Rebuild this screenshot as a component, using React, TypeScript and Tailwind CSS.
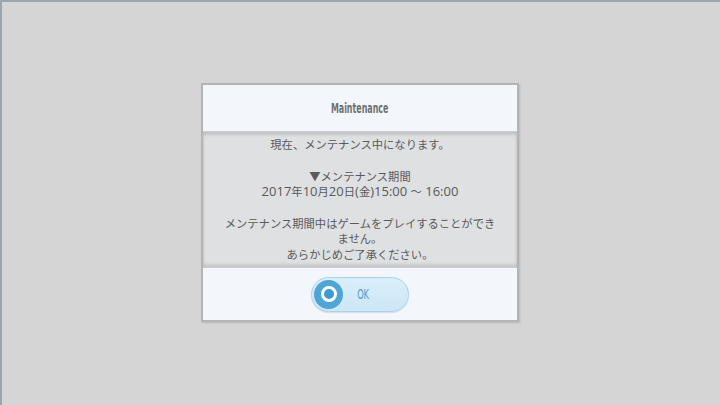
import React from 'react';

const jp = { fontFamily: '"Noto Sans CJK JP", "Noto Sans", sans-serif' };
const latin = { fontFamily: '"Open Sans", "Noto Sans", sans-serif' };
const cond = { fontFamily: '"DejaVu Sans Condensed", "DejaVu Sans", sans-serif' };

const L = ({ children }: { children: React.ReactNode }) => (
    <span style={latin} className="text-[13px]">{children}</span>
);

export default function App() {
    return (
        <div className="w-[720px] h-[405px] bg-[#d5d5d5] shadow-[inset_2px_2px_0_#9ca6ae] flex items-start justify-center overflow-hidden">
            <div className="mt-[83px] w-[318px] border-2 border-[#b4b4b4] bg-[#f3f6fa] flex flex-col shadow-[1px_1px_2px_rgba(0,0,0,0.15)]">
                <div className="h-[46px] flex items-center justify-center">
                    <span style={cond} className="text-[14px] font-bold text-[#707070] scale-x-[0.63]">Maintenance</span>
                </div>
                <div style={jp} className="h-[137px] bg-[#dee0e2] border-y border-[#c9cbcd] shadow-[inset_0_3px_3px_rgba(0,0,0,0.12),inset_0_-3px_3px_rgba(0,0,0,0.1)] flex flex-col items-center pt-[5px] px-[18px] text-[11.3px] leading-[15.5px] text-[#5a5a5a] text-center">
                    <p>現在、メンテナンス中になります。</p>
                    <p className="mt-[16px]">▼メンテナンス期間</p>
                    <p><L>2017</L>年<L>10</L>月<L>20</L>日<L>(</L>金<L>)15:00 </L>～<L> 16:00</L></p>
                    <p className="mt-[16px]">メンテナンス期間中はゲームをプレイすることができません。</p>
                    <p>あらかじめご了承ください。</p>
                </div>
                <div className="h-[52px] flex items-center justify-center">
                    <div className="w-[98px] h-[35px] rounded-full bg-gradient-to-b from-[#d9eefa] to-[#cde7f6] border border-[#a8d3ee] flex items-center pl-[2px] shadow-[0_1px_1px_rgba(0,0,0,0.1)]">
                        <div className="w-[29px] h-[29px] rounded-full bg-[#4ea5d6] flex items-center justify-center">
                            <div className="w-[16px] h-[16px] rounded-full border-[3px] border-white bg-[#3d9ad0]" />
                        </div>
                        <span style={cond} className="ml-[11px] text-[14px] text-[#4e9ccf] scale-x-[0.65]">OK</span>
                    </div>
                </div>
            </div>
        </div>
    );
}
